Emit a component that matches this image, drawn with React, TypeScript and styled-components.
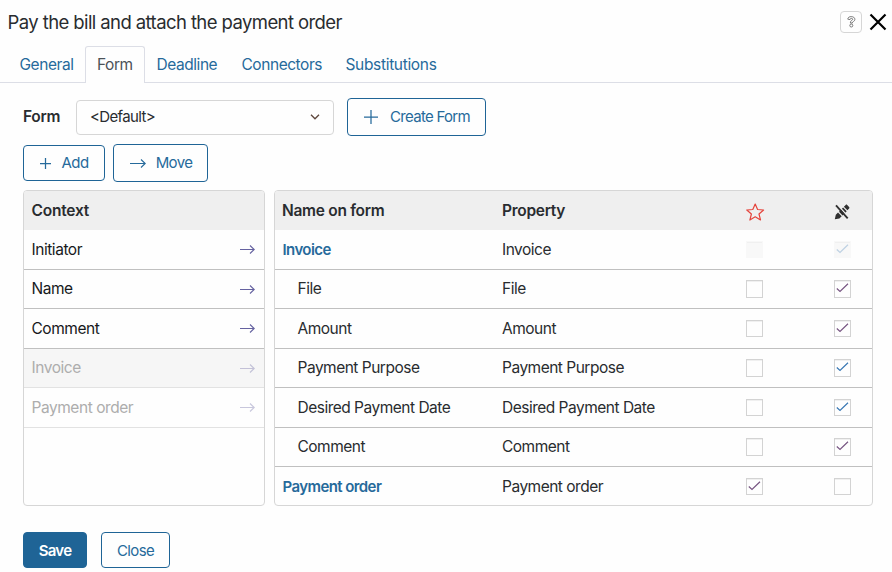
import React from "react";
import styled, { createGlobalStyle } from "styled-components";

const blue = "#1f6496";
const link = "#266a9b";

const Global = createGlobalStyle`
  * { box-sizing: border-box; }
  body {
    margin: 0;
    background: #fefefe;
    color: #292c2f;
    font: 400 15.5px/20px Inter, "Liberation Sans", sans-serif;
    letter-spacing: -0.5px;
    overflow: hidden;
  }
  svg { display: block; flex: none; fill: none; }
`;

const Dialog = styled.main`
  display: flex;
  flex-direction: column;
  width: 892px;
  height: 572px;
  white-space: nowrap;
`;
const TitleBar = styled.header`
  display: flex;
  align-items: center;
  height: 46px;
  padding: 0 5px 2px 7.5px;
`;
const Title = styled.h1`
  flex: 1;
  margin: 0;
  font-size: 18.5px;
  font-weight: 400;
  letter-spacing: -0.59px;
`;
const HelpButton = styled.button`
  display: grid;
  place-items: center;
  width: 22px;
  height: 22px;
  margin-right: 7px;
  padding: 0;
  border: 1px solid #d6d6d6;
  border-radius: 4px;
  background: none;
`;
const CloseIconButton = styled.button`
  padding: 0;
  border: 0;
  background: none;
`;
const Tabs = styled.nav`
  display: flex;
  height: 37px;
  padding-left: 8px;
  border-bottom: 1px solid #dcdee6;
`;
const Tab = styled.a<{ $width: number; $active?: boolean; $tracking?: number }>`
  width: ${(p) => p.$width}px;
  height: ${(p) => (p.$active ? 37 : 36)}px;
  padding: 8px 0 0 ${(p) => (p.$active ? 11 : 10.5)}px;
  border: 1px solid ${(p) => (p.$active ? "#dcdee6" : "transparent")};
  border-bottom: 0;
  border-radius: 3px 3px 0 0;
  background: ${(p) => (p.$active ? "#fefefe" : "none")};
  color: ${(p) => (p.$active ? "#4c5258" : link)};
  letter-spacing: ${(p) => p.$tracking ?? -0.45}px;
`;
const Body = styled.section`
  display: flex;
  flex-direction: column;
  padding: 15px 19px 0 23px;
`;
const FormRow = styled.div`
  display: flex;
  align-items: center;
  height: 38px;
`;
const Label = styled.label`
  width: 53px;
  font-weight: 600;
  letter-spacing: -0.3px;
`;
const Select = styled.div`
  display: flex;
  align-items: center;
  justify-content: space-between;
  width: 258px;
  height: 35px;
  margin-right: 13px;
  padding: 0 13px;
  border: 1px solid #d6d6d6;
  border-radius: 4px;
  font-size: 15px;
  letter-spacing: -0.65px;
`;
const Button = styled.button<{ $width: number; $height?: number; $primary?: boolean; $gap?: number; $tracking?: number; $lower?: boolean }>`
  display: flex;
  align-items: center;
  justify-content: center;
  gap: ${(p) => p.$gap ?? 10}px;
  width: ${(p) => p.$width}px;
  height: ${(p) => p.$height ?? 36}px;
  padding: ${(p) => (p.$lower ? "2px 0 0" : "0 0 0 1px")};
  border: 1px solid ${blue};
  border-radius: 4px;
  background: ${(p) => (p.$primary ? blue : "#fefefe")};
  color: ${(p) => (p.$primary ? "#fff" : link)};
  font: inherit;
  font-size: 15px;
  font-weight: ${(p) => (p.$primary ? 600 : 400)};
  letter-spacing: ${(p) => p.$tracking ?? -0.5}px;
`;
const Actions = styled.div`
  display: flex;
  align-items: center;
  gap: 8px;
  height: 38px;
  margin-top: 8px;
`;
const Panels = styled.div`
  display: grid;
  grid-template-columns: 242px 599px;
  gap: 9px;
  height: 316px;
  margin-top: 8px;
`;
const Panel = styled.section`
  overflow: hidden;
  border: 1px solid #d6d6d6;
  border-radius: 4px;
`;
const ContextHead = styled.div`
  height: 39px;
  padding: 9.5px 7.5px;
  background: #efefef;
  font-weight: 600;
  letter-spacing: -0.2px;
`;
const ContextRow = styled.div<{ $tall: boolean; $disabled?: boolean; $shaded?: boolean }>`
  display: flex;
  align-items: center;
  justify-content: space-between;
  height: ${(p) => (p.$tall ? 40 : 39)}px;
  padding: 0 9px 0 7.5px;
  border-bottom: 1px solid ${(p) => (p.$disabled ? "#e2e2e2" : "#c0c0c0")};
  background: ${(p) => (p.$shaded ? "#f6f6f6" : "none")};
  color: ${(p) => (p.$disabled ? "#adadad" : "#17191b")};
  letter-spacing: -0.45px;

  svg {
    opacity: ${(p) => (p.$disabled ? 0.35 : 1)};
  }
`;
const columns = "220px 243px 88px 1fr";
const TableHead = styled.div`
  display: grid;
  grid-template-columns: ${columns};
  align-items: center;
  height: 39px;
  padding-left: 7px;
  background: #efefef;
  font-weight: 600;
  letter-spacing: -0.29px;

  svg {
    margin: 3px 0 0 1px;
  }
`;
const TableRow = styled.div<{ $tall: boolean }>`
  display: grid;
  grid-template-columns: ${columns};
  align-items: center;
  height: ${(p) => (p.$tall ? 40 : 39)}px;
  padding-left: 7px;
  border-bottom: 1px solid #c0c0c0;

  &:last-child {
    border-bottom-color: transparent;
  }
`;
const Name = styled.span<{ $group?: boolean }>`
  padding-left: ${(p) => (p.$group ? 0.5 : 15.5)}px;
  color: ${(p) => (p.$group ? link : "inherit")};
  font-size: ${(p) => (p.$group ? 15 : 15.5)}px;
  font-weight: ${(p) => (p.$group ? 600 : 400)};
  letter-spacing: ${(p) => (p.$group ? -0.58 : -0.5)}px;
`;
const Box = styled.span<{ $tall: boolean; $disabled?: boolean }>`
  display: grid;
  justify-content: center;
  align-content: start;
  width: 17px;
  height: ${(p) => (p.$tall ? 17 : 18)}px;
  margin-left: 1px;
  padding-top: 2px;
  border: 1px solid ${(p) => (p.$disabled ? "#f8f8f8" : "#d3d3d3")};
  background: ${(p) => (p.$disabled ? "#f8f8f8" : "#fefefe")};
  box-shadow: inset 0 1px 0 #f0f0f0;

  svg {
    opacity: ${(p) => (p.$disabled ? 0.3 : 1)};
  }
`;
const Footer = styled.footer`
  display: flex;
  gap: 14px;
  margin-top: 26px;
`;

const Arrow = ({ color = "#6562a0", width = 15 }: { color?: string; width?: number }) => (
  <svg width={width} height="9" viewBox={`0 0 ${width} 9`} stroke={color}>
    <path d={`M0 4.5H${width - 0.7}M${width - 5} .5l4.2 4-4.2 4`} strokeWidth="1.1" />
  </svg>
);
const Plus = ({ size }: { size: number }) => (
  <svg width={size} height={size} viewBox={`0 0 ${size} ${size}`} stroke={link}>
    <path d={`M0 ${size / 2}H${size}M${size / 2} 0V${size}`} strokeWidth="1.25" />
  </svg>
);
const Chevron = () => (
  <svg width="10" height="6" viewBox="0 0 10 6" stroke="#5d463b">
    <path d="M1 .8l4 4 4-4" strokeWidth="1.3" />
  </svg>
);
const Help = () => (
  <svg width="9" height="12" viewBox="0 0 9 12" stroke="#555" strokeWidth=".75">
    <path d="M.8 3.2C.8 1.4 2.3.6 4.2.6S7.9 1.5 7.9 3.3c0 1.3-.9 1.9-1.8 2.4-.6.3-.7.7-.7 1.3H3.4c0-1.4.4-2 1.3-2.6.6-.4 1-.6 1-1.2 0-.5-.5-.8-1.3-.8-.9 0-1.3.5-1.4 1.2z" />
    <circle cx="4.3" cy="9.5" r="1.5" />
  </svg>
);
const Cross = () => (
  <svg width="18" height="18" viewBox="0 0 18 18" stroke="#000">
    <path d="M1.5 1.5l15 15M16.5 1.5l-15 15" strokeWidth="2.2" />
  </svg>
);
const Star = () => (
  <svg width="19" height="18" viewBox="0 0 19 18" stroke="#e5453d">
    <path d="M9.2 1.1l2.4 5.4 6 .5-4.6 4 1.5 5.9-5.3-3.1L3.9 17l1.5-6L.8 7l6-.5z" strokeWidth="1.2" strokeLinejoin="round" />
  </svg>
);
const NoEdit = () => (
  <svg width="17" height="16" viewBox="0 0 17 16">
    <path d="M.8 15.2l1-4.4 2.2-2.2 3.7 3.7-2.3 2.3zM5 7.7L9.1 3.6l3.6 3.6-4.1 4.2zM9.9 2.8l1.8-1.9c.5-.5 1-.5 1.5 0l1.9 2c.5.5.5 1 0 1.5l-1.7 1.8z" fill="#303030" />
    <path d="M3.2.5l12 13.2" stroke="#efefef" strokeWidth="1.3" />
    <path d="M2 1.3l11.7 13" stroke="#303030" strokeWidth="1.8" />
  </svg>
);
const Check = ({ color }: { color: string }) => (
  <svg width="13" height="10" viewBox="0 0 13 10" stroke={color}>
    <path d="M.8 5.5l3.2 2.9L12 .8" strokeWidth="1.2" />
  </svg>
);

const context = [
  { name: "Initiator" },
  { name: "Name" },
  { name: "Comment" },
  { name: "Invoice", disabled: true, shaded: true },
  { name: "Payment order", disabled: true },
];

const purple = "#775582";
const azure = "#3978b4";
const properties: { name: string; group?: boolean; required?: string; readOnly?: string; locked?: boolean }[] = [
  { name: "Invoice", group: true, readOnly: azure, locked: true },
  { name: "File", readOnly: purple },
  { name: "Amount", readOnly: purple },
  { name: "Payment Purpose", readOnly: azure },
  { name: "Desired Payment Date", readOnly: azure },
  { name: "Comment", readOnly: purple },
  { name: "Payment order", group: true, required: purple },
];

export default function App() {
  return (
    <Dialog>
      <Global />
      <TitleBar>
        <Title>Pay the bill and attach the payment order</Title>
        <HelpButton aria-label="Help"><Help /></HelpButton>
        <CloseIconButton aria-label="Close"><Cross /></CloseIconButton>
      </TitleBar>
      <Tabs>
        <Tab $width={77}>General</Tab>
        <Tab $width={60} $active>Form</Tab>
        <Tab $width={85}>Deadline</Tab>
        <Tab $width={104}>Connectors</Tab>
        <Tab $width={115} $tracking={-0.33}>Substitutions</Tab>
      </Tabs>
      <Body>
        <FormRow>
          <Label>Form</Label>
          <Select>&lt;Default&gt;<Chevron /></Select>
          <Button $width={139} $height={38} $gap={12} $tracking={-0.72}><Plus size={14} />Create Form</Button>
        </FormRow>
        <Actions>
          <Button $width={82}><Plus size={11} />Add</Button>
          <Button $width={95} $height={38} $tracking={-0.6}><Arrow color={link} width={16} />Move</Button>
        </Actions>
        <Panels>
          <Panel>
            <ContextHead>Context</ContextHead>
            {context.map((item, i) => (
              <ContextRow key={item.name} $tall={i % 2 === 0} $disabled={item.disabled} $shaded={item.shaded}>
                {item.name}
                <Arrow />
              </ContextRow>
            ))}
          </Panel>
          <Panel>
            <TableHead>
              <span>Name on form</span>
              <span>Property</span>
              <Star />
              <NoEdit />
            </TableHead>
            {properties.map((row, i) => (
              <TableRow key={row.name} $tall={i % 2 === 0}>
                <Name $group={row.group}>{row.name}</Name>
                <span>{row.name}</span>
                <Box $tall={i % 2 === 0} $disabled={row.locked}>{row.required && <Check color={row.required} />}</Box>
                <Box $tall={i % 2 === 0} $disabled={row.locked}>{row.readOnly && <Check color={row.readOnly} />}</Box>
              </TableRow>
            ))}
          </Panel>
        </Panels>
        <Footer>
          <Button $width={64} $primary $lower $tracking={-0.7}>Save</Button>
          <Button $width={69} $lower $tracking={-0.6}>Close</Button>
        </Footer>
      </Body>
    </Dialog>
  );
}
